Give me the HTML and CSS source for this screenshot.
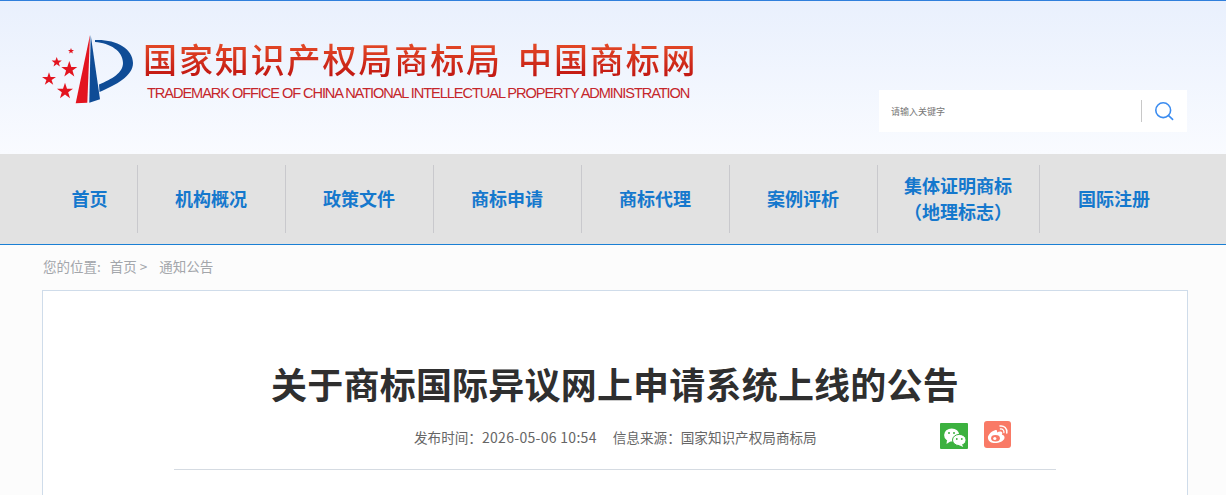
FILE: index.html
```html
<!DOCTYPE html>
<html lang="zh-CN">
<head>
    <meta charset="UTF-8">
    <meta name="viewport" content="width=device-width, initial-scale=1.0">
    <title>关于商标国际异议网上申请系统上线的公告</title>
    <link rel="stylesheet" href="styles.css">
</head>
<body>
    <div class="header">
        <div class="logo">
            <svg class="logo-mark" width="100" height="80" viewBox="0 0 100 80">
                <path d="M50 5 L35.7 73.3 L47.3 72.7 Z" fill="#e3141f"/>
                <path d="M50.7 5 L60 69.3 L49.3 72.7 Z" fill="#0f4c96"/>
                <path d="M55 10 C75 9 93 18 93 33 C93 46 76 55 59.5 62 L59 54.5 C72 49 83 43 83 33 C83 21 70 13 55 12 Z" fill="#0f4c96"/>
                <polygon points="29.3,31 31.3,37 37.3,37 32.5,40.6 34.3,46.5 29.3,42.8 24.3,46.5 26.1,40.6 21.3,37 27.3,37" fill="#e3141f"/>
                <polygon points="25,52.7 27,58.7 33,58.7 28.2,62.3 30,68.2 25,64.5 20,68.2 21.8,62.3 17,58.7 23,58.7" fill="#e3141f"/>
                <polygon points="9,42.2 10.6,47 16,47 11.6,50 13.2,54.8 9,51.8 4.8,54.8 6.4,50 2,47 7.4,47" fill="#e3141f"/>
                <polygon points="16.7,27 18,30.6 21.8,30.6 18.8,32.9 19.9,36.5 16.7,34.3 13.5,36.5 14.6,32.9 11.6,30.6 15.4,30.6" fill="#e3141f"/>
                <polygon points="31,18 31.8,20 34,20 32.2,21.4 32.9,23.5 31,22.2 29.1,23.5 29.8,21.4 28,20 30.2,20" fill="#e3141f"/>
            </svg>
            <div class="logo-text">
                <div class="logo-cn">国家知识产权局商标局<span class="logo-cn-gap">中国商标网</span></div>
                <div class="logo-en">TRADEMARK OFFICE OF CHINA NATIONAL INTELLECTUAL PROPERTY ADMINISTRATION</div>
            </div>
        </div>
        <div class="search">
            <span class="search-text">请输入关键字</span>
            <span class="search-line"></span>
            <svg class="search-icon" width="20" height="20" viewBox="0 0 20 20" fill="none" stroke="#3b8cf0" stroke-width="1.6">
                <circle cx="9.2" cy="9.2" r="7.4"/>
                <path d="M14.6 14.6 L18.6 18.4" stroke-linecap="round"/>
            </svg>
        </div>
    </div>

    <div class="nav">
        <a class="nav-item nav-first">首页</a>
        <a class="nav-item">机构概况</a>
        <a class="nav-item">政策文件</a>
        <a class="nav-item">商标申请</a>
        <a class="nav-item">商标代理</a>
        <a class="nav-item">案例评析</a>
        <a class="nav-item nav-wide">集体证明商标<br>（地理标志）</a>
        <a class="nav-item nav-last">国际注册</a>
    </div>

    <div class="crumbs">
        <span>您的位置:</span>
        <span>首页 &gt;</span>
        <span>通知公告</span>
    </div>

    <div class="article">
        <h1>关于商标国际异议网上申请系统上线的公告</h1>
        <div class="meta">
            <div class="meta-text">
                <span>发布时间：<span class="meta-time">2026-05-06 10:54</span></span>
                <span>信息来源：国家知识产权局商标局</span>
            </div>
            <div class="share">
                <svg class="share-wx" width="28" height="26" viewBox="0 0 28 26">
                    <rect width="28" height="26" rx="1" fill="#3cb13f"/>
                    <ellipse cx="11.7" cy="12" rx="7.6" ry="6.6" fill="#fff"/>
                    <path d="M7 17 L6.5 21 L11 18 Z" fill="#fff"/>
                    <ellipse cx="19.3" cy="17" rx="6.8" ry="5.6" fill="#fff" stroke="#3cb13f" stroke-width="1"/>
                    <path d="M21.8 21 L23.2 24 L18.8 22 Z" fill="#fff"/>
                    <circle cx="9" cy="10" r="1" fill="#3cb13f"/>
                    <circle cx="14" cy="10" r="1" fill="#3cb13f"/>
                    <circle cx="16.8" cy="16" r="0.9" fill="#3cb13f"/>
                    <circle cx="21.8" cy="16" r="0.9" fill="#3cb13f"/>
                </svg>
                <svg class="share-wb" width="27" height="27" viewBox="0 0 27 27">
                    <rect width="27" height="27" rx="3" fill="#f97a66"/>
                    <path d="M11.5 9 C6.5 10.5 3.5 14.5 4 17.5 C4.6 21 8.5 22.5 12.5 22 C17 21.5 21 19 20.5 16 C20.2 14.5 18.8 14 18 13.8 C18.7 12 18.2 11 17 10.6 C15.8 10.3 14.2 10.8 13 11.4 C13.4 9.4 12.8 8.7 11.5 9 Z" fill="#fff"/>
                    <ellipse cx="11.5" cy="17.3" rx="4.4" ry="3.3" fill="#f97a66"/>
                    <circle cx="10.8" cy="17.5" r="1.6" fill="#fff"/>
                    <path d="M16 5 C20 4.4 23.5 7.5 22.8 12" fill="none" stroke="#fff" stroke-width="1.5" stroke-linecap="round"/>
                    <path d="M16.4 8 C18.5 7.7 20.3 9.4 19.9 11.6" fill="none" stroke="#fff" stroke-width="1.3" stroke-linecap="round"/>
                </svg>
            </div>
        </div>
        <div class="rule"></div>
    </div>
</body>
</html>
```

FILE: styles.css
```css
* {
    margin: 0;
    padding: 0;
    box-sizing: border-box;
}
body {
    font-family: "Liberation Sans", "Noto Sans CJK SC", sans-serif;
    background-color: #fcfcfc;
    color: #333;
}

.header {
    height: 154px;
    border-top: 1px solid #2f7fdc;
    background: linear-gradient(#e9f0fd, #f9fbff);
    padding: 29px 39px 0 40px;
    display: flex;
    justify-content: space-between;
}
.logo {
    display: flex;
    align-items: flex-start;
}
.logo-mark {
    flex: none;
}
.logo-text {
    margin-left: 3px;
    padding-top: 9px;
}
.logo-cn {
    font-family: "Noto Sans CJK SC", sans-serif;
    font-size: 34px;
    line-height: 40px;
    font-weight: 500;
    letter-spacing: 1.9px;
    white-space: nowrap;
    background: linear-gradient(#e8502a, #bf1310);
    -webkit-background-clip: text;
    background-clip: text;
    color: transparent;
}
.logo-cn-gap {
    margin-left: 16px;
}
.logo-en {
    margin: 6px 0 0 4px;
    font-size: 14.6px;
    line-height: 17px;
    letter-spacing: -1.08px;
    white-space: nowrap;
    color: #c5262b;
}

.search {
    width: 308px;
    height: 42px;
    margin-top: 60px;
    background-color: #fff;
    display: flex;
    align-items: center;
    padding-left: 12px;
}
.search-text {
    width: 250px;
    font-family: "Noto Sans CJK SC", sans-serif;
    font-size: 9px;
    color: #777;
}
.search-line {
    width: 1px;
    height: 22px;
    background-color: #c8c8c8;
}
.search-icon {
    margin-left: 12px;
}

.nav {
    height: 91px;
    padding: 11px 0 0 42px;
    background-color: #e2e2e2;
    border-bottom: 1px solid #1a7fd4;
    display: flex;
    align-items: flex-start;
}
.nav-item {
    width: 148px;
    height: 68px;
    padding: 0 1px 2px 0;
    display: flex;
    align-items: center;
    justify-content: center;
    text-align: center;
    font-family: "Noto Sans CJK SC", sans-serif;
    font-size: 18px;
    line-height: 26px;
    font-weight: 700;
    color: #1578cd;
    border-right: 1px solid #c9c9cd;
}
.nav-first {
    width: 96px;
    padding-right: 0;
}
.nav-wide {
    width: 162px;
}
.nav-last {
    width: 149px;
    border-right: none;
}

.crumbs {
    height: 45px;
    padding: 12px 0 0 43px;
    font-family: "Noto Sans CJK SC", sans-serif;
    font-size: 13.5px;
    line-height: 18px;
    color: #a3a6ab;
    display: flex;
    gap: 9px;
}
.crumbs span:last-child {
    margin-left: 3px;
}

.article {
    width: 1146px;
    height: 205px;
    margin-left: 42px;
    padding: 0 131px;
    background-color: #fff;
    border: 1px solid #cfdcea;
    border-bottom: none;
}
.article h1 {
    margin-top: 67px;
    font-family: "Noto Sans CJK SC", sans-serif;
    font-size: 36px;
    line-height: 50px;
    font-weight: 700;
    letter-spacing: 0.2px;
    text-align: center;
    color: #2f2f2f;
}
.meta {
    height: 38px;
    margin-top: 13px;
    position: relative;
    font-family: "Noto Sans CJK SC", sans-serif;
    font-size: 13.6px;
    color: #666;
}
.meta-text {
    display: flex;
    gap: 16px;
    padding: 6px 0 0 240px;
    line-height: 20px;
}
.meta-time {
    font-size: 14px;
    letter-spacing: 0.3px;
}
.share {
    position: absolute;
    left: 766px;
    top: 0;
    display: flex;
    gap: 16px;
    align-items: flex-start;
}
.share-wx {
    margin-top: 2px;
}
.rule {
    height: 1px;
    margin-top: 10px;
    background-color: #d5dbe2;
}
```
